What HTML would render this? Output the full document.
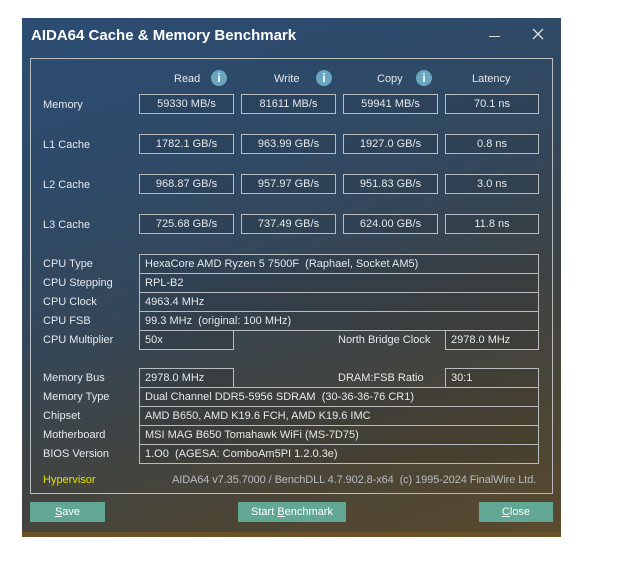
<!DOCTYPE html>
<html><head><meta charset="utf-8"><style>
body{margin:0;width:629px;height:567px;background:#fff;position:relative;overflow:hidden;font-family:"Liberation Sans",sans-serif}
#w{position:absolute;left:22px;top:18px;width:539px;height:519px;overflow:hidden;
background:linear-gradient(160deg,#2c4c73 0%,#2e4a68 25%,#34475a 45%,#3e4445 62%,#4b4536 80%,#5a4a2e 100%)}
#w:after{content:"";position:absolute;left:0;right:0;bottom:0;height:5px;background:#6a5128}
.t{position:absolute;color:#e6e9ec;font-size:11px;white-space:nowrap}
.b{position:absolute;border:1px solid #b8bcc0;box-sizing:border-box;height:20px;color:#e6e9ec;font-size:11px;line-height:19px;white-space:nowrap;background:rgba(0,0,0,0.08)}
.c{text-align:center}.l{padding-left:5px}
.i{position:absolute;width:16px;height:16px;border-radius:50%;background:#6aa6c0;color:#fff;font-weight:bold;font-size:12px;text-align:center;line-height:16px}
.btn{position:absolute;top:484px;height:20px;background:#62a793;color:#fff;font-size:11px;text-align:center;line-height:20px}
</style></head><body><div id="w">
<div class="t" style="left:9px;top:9px;font-size:15px;font-weight:bold;color:#fff">AIDA64 Cache &amp; Memory Benchmark</div>
<svg style="position:absolute;left:464px;top:8px" width="70" height="20"><line x1="3" y1="10.5" x2="14" y2="10.5" stroke="#ddd" stroke-width="1"/><line x1="47" y1="3" x2="57" y2="13" stroke="#ddd" stroke-width="1.3"/><line x1="57" y1="3" x2="47" y2="13" stroke="#ddd" stroke-width="1.3"/></svg>
<div style="position:absolute;left:8px;top:40px;width:523px;height:436px;border:1px solid #b8bcc0;box-sizing:border-box"></div>
<div class="t" style="left:152px;top:55px">Read</div><div class="i" style="left:189px;top:52px">i</div>
<div class="t" style="left:252px;top:55px">Write</div><div class="i" style="left:294px;top:52px">i</div>
<div class="t" style="left:355px;top:55px">Copy</div><div class="i" style="left:394px;top:52px">i</div>
<div class="t" style="left:450px;top:55px">Latency</div>

<div class="t" style="left:21px;top:81px">Memory</div>
<div class="b c" style="left:117px;top:76px;width:95px">59330 MB/s</div>
<div class="b c" style="left:219px;top:76px;width:95px">81611 MB/s</div>
<div class="b c" style="left:321px;top:76px;width:95px">59941 MB/s</div>
<div class="b c" style="left:423px;top:76px;width:94px">70.1 ns</div>

<div class="t" style="left:21px;top:121px">L1 Cache</div>
<div class="b c" style="left:117px;top:116px;width:95px">1782.1 GB/s</div>
<div class="b c" style="left:219px;top:116px;width:95px">963.99 GB/s</div>
<div class="b c" style="left:321px;top:116px;width:95px">1927.0 GB/s</div>
<div class="b c" style="left:423px;top:116px;width:94px">0.8 ns</div>

<div class="t" style="left:21px;top:161px">L2 Cache</div>
<div class="b c" style="left:117px;top:156px;width:95px">968.87 GB/s</div>
<div class="b c" style="left:219px;top:156px;width:95px">957.97 GB/s</div>
<div class="b c" style="left:321px;top:156px;width:95px">951.83 GB/s</div>
<div class="b c" style="left:423px;top:156px;width:94px">3.0 ns</div>

<div class="t" style="left:21px;top:201px">L3 Cache</div>
<div class="b c" style="left:117px;top:196px;width:95px">725.68 GB/s</div>
<div class="b c" style="left:219px;top:196px;width:95px">737.49 GB/s</div>
<div class="b c" style="left:321px;top:196px;width:95px">624.00 GB/s</div>
<div class="b c" style="left:423px;top:196px;width:94px">11.8 ns</div>

<div class="t" style="left:21px;top:240px">CPU Type</div><div class="b l" style="left:117px;top:236px;width:400px">HexaCore AMD Ryzen 5 7500F&nbsp; (Raphael, Socket AM5)</div>
<div class="t" style="left:21px;top:259px">CPU Stepping</div><div class="b l" style="left:117px;top:255px;width:400px">RPL-B2</div>
<div class="t" style="left:21px;top:278px">CPU Clock</div><div class="b l" style="left:117px;top:274px;width:400px">4963.4 MHz</div>
<div class="t" style="left:21px;top:297px">CPU FSB</div><div class="b l" style="left:117px;top:293px;width:400px">99.3 MHz&nbsp; (original: 100 MHz)</div>
<div class="t" style="left:21px;top:316px">CPU Multiplier</div><div class="b l" style="left:117px;top:312px;width:95px">50x</div>
<div class="t" style="left:316px;top:316px">North Bridge Clock</div><div class="b l" style="left:423px;top:312px;width:94px">2978.0 MHz</div>

<div class="t" style="left:21px;top:354px">Memory Bus</div><div class="b l" style="left:117px;top:350px;width:95px">2978.0 MHz</div>
<div class="t" style="left:316px;top:354px">DRAM:FSB Ratio</div><div class="b l" style="left:423px;top:350px;width:94px">30:1</div>
<div class="t" style="left:21px;top:373px">Memory Type</div><div class="b l" style="left:117px;top:369px;width:400px">Dual Channel DDR5-5956 SDRAM&nbsp; (30-36-36-76 CR1)</div>
<div class="t" style="left:21px;top:392px">Chipset</div><div class="b l" style="left:117px;top:388px;width:400px">AMD B650, AMD K19.6 FCH, AMD K19.6 IMC</div>
<div class="t" style="left:21px;top:411px">Motherboard</div><div class="b l" style="left:117px;top:407px;width:400px">MSI MAG B650 Tomahawk WiFi (MS-7D75)</div>
<div class="t" style="left:21px;top:430px">BIOS Version</div><div class="b l" style="left:117px;top:426px;width:400px">1.O0&nbsp; (AGESA: ComboAm5PI 1.2.0.3e)</div>

<div class="t" style="left:21px;top:456px;color:#e0e000">Hypervisor</div>
<div class="t" style="left:150px;top:456px;color:#b8bcc0;letter-spacing:-0.1px">AIDA64 v7.35.7000 / BenchDLL 4.7.902.8-x64&nbsp; (c) 1995-2024 FinalWire Ltd.</div>

<div class="btn" style="left:8px;width:75px"><u>S</u>ave</div>
<div class="btn" style="left:216px;width:108px">Start <u>B</u>enchmark</div>
<div class="btn" style="left:457px;width:74px"><u>C</u>lose</div>
</div></body></html>
